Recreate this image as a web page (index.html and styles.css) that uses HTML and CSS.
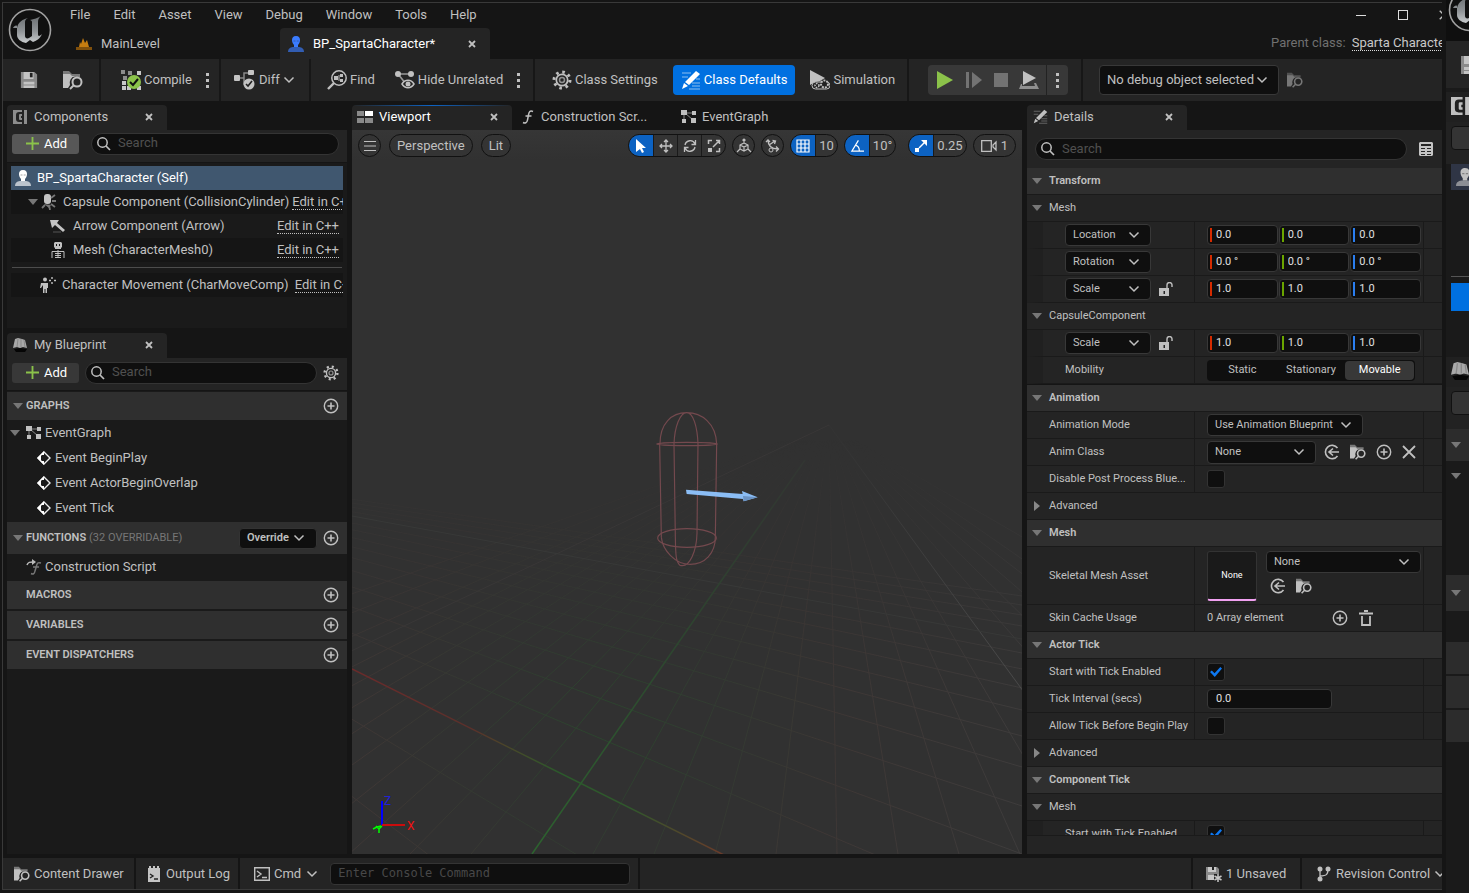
FILE: index.html
```html
<!DOCTYPE html>
<html lang="en">
<head>
<meta charset="utf-8">
<title>BP_SpartaCharacter</title>
<link rel="stylesheet" href="styles.css">
</head>
<body>
<svg class="defs" aria-hidden="true">
  <defs>
    <linearGradient id="metal" x1="0" y1="0" x2="0" y2="1"><stop offset="0" stop-color="#6b6f72"/><stop offset=".55" stop-color="#8f9396"/><stop offset="1" stop-color="#c8cbcd"/></linearGradient>
  </defs>
  <symbol id="logo" viewBox="0 0 44 44"><circle cx="22" cy="22" r="20.5" fill="#101010" stroke="#a2a2a2" stroke-width="1.6"/><path fill="url(#metal)" d="M9 20C10 14 15 11 20 10c-2 1-3 2-3 4v14c0 2 2 3 4 2l3-2V14c0-1-1-2-2-2 4-1 8-2 11-4-2 2-3 3-3 6v12c0 3 2 2 4 0-2 5-6 7-9 8l-3-2-4 3c-5-1-9-4-9-8V18c-1-1-3 0-4 2z"/></symbol>
  <symbol id="save" viewBox="0 0 20 20"><path d="M1 1h15l3 3v15H1z" fill="#8a8a8a"/><path fill="#c4c4c4" d="M4 1h11v8H4zM4 12h12v3H4zM4 16h12v3H4z"/><path fill="#222" d="M11 2h3v5h-3z"/></symbol>
  <symbol id="browse" viewBox="0 0 20 20"><path fill="currentColor" fill-opacity=".55" d="M0 1h6l3 3h8v3H0z"/><path fill="currentColor" d="M0 4h7l2 2h3a7 7 0 0 0-5 9l-2 3H0z"/><circle cx="14" cy="12" r="4.500" fill="none" stroke="currentColor" stroke-width="2"/><path d="M11 15l-4 4" stroke="currentColor" stroke-width="2"/></symbol>
  <symbol id="compile" viewBox="0 0 20 20"><path fill="#8c8c8c" d="M0 0h4v4H0zM7 1h4v4H7zM2 6h4v4H2z"/><path fill="#c8c8c8" d="M16 1h4v4h-4zM1 11h4v4H1zM1 16h4v4H1zM6 16h4v4H6zM16 16h4v4h-4z"/><circle cx="13" cy="12" r="7" fill="#8bc24a"/><path d="M9 12l3 3 5-6" fill="none" stroke="#111" stroke-width="2"/></symbol>
  <symbol id="dots" viewBox="0 0 4 16"><path fill="currentColor" d="M0 1h3v3H0zM0 7h3v3H0zM0 13h3v3H0z"/></symbol>
  <symbol id="diff" viewBox="0 0 22 20"><path d="M4 8h6M10 8V3h5M10 8v6h3" fill="none" stroke="#888" stroke-width="1.500"/><rect x="0" y="5" width="6" height="6" rx="1" fill="#c4c4c4"/><rect x="14" y="0" width="6" height="5" rx="1" fill="#c4c4c4"/><circle cx="15" cy="14" r="5.500" fill="#c4c4c4"/><path d="M12 14l2 2 4-5" fill="none" stroke="#222" stroke-width="1.600"/></symbol>
  <symbol id="chev" viewBox="0 0 12 8"><path d="M1.500 1.500L6 6l4.500-4.500" fill="none" stroke="currentColor" stroke-width="1.500"/></symbol>
  <symbol id="find" viewBox="0 0 20 20"><circle cx="12" cy="8" r="7.200" fill="none" stroke="currentColor" stroke-width="1.500"/><path d="M7 13l-6 6" stroke="currentColor" stroke-width="2.400"/><path fill="currentColor" d="M7 6h4v4H7zM13 4h3v3h-3zM13 9h3v3h-3z"/><path d="M12 5v6" stroke="currentColor"/></symbol>
  <symbol id="hide" viewBox="0 0 20 20"><path d="M3 4h14M3 4l8 10" stroke="#999" stroke-width="1.600"/><circle cx="3" cy="4" r="3" fill="currentColor"/><circle cx="16" cy="4" r="3" fill="currentColor"/><path d="M7 14c3-5 9-5 12 0-3 5-9 5-12 0z" fill="#222" stroke="currentColor" stroke-width="1.500"/><circle cx="13" cy="14" r="2.500" fill="currentColor"/></symbol>
  <symbol id="gear" viewBox="0 0 20 20"><circle cx="10" cy="10" r="5.700" fill="none" stroke="currentColor" stroke-width="1.700"/><circle cx="10" cy="10" r="8" fill="none" stroke="currentColor" stroke-width="3" stroke-dasharray="2.600 3.680"/><circle cx="10" cy="10" r="2.500" fill="none" stroke="currentColor" stroke-opacity=".7" stroke-width="1.500"/></symbol>
  <symbol id="pencil" viewBox="0 0 20 20"><path d="M1 3h9M1 7h6M11 13h8M11 16h8M8 19h11M15 9h4" stroke="currentColor" stroke-opacity=".55"/><path fill="currentColor" d="M15 1l4 3L8 15l-4-3zM3 13l4 3-6 3z"/></symbol>
  <symbol id="sim" viewBox="0 0 20 20"><path fill="currentColor" d="M0 0l15 8-5 3-5 1-5 3z"/><rect x="2" y="12" width="18" height="7" rx="3.500" fill="#222" stroke="currentColor"/><circle cx="7" cy="15.500" r="2" fill="none" stroke="currentColor" stroke-width="1.500" stroke-dasharray="1.500 1"/><circle cx="14.500" cy="14" r="3.500" fill="#222" stroke="currentColor" stroke-width="2" stroke-dasharray="2 1"/></symbol>
  <symbol id="play" viewBox="0 0 18 18"><path fill="#8bc24a" d="M1 0l16 9-16 9z"/></symbol>
  <symbol id="step" viewBox="0 0 16 16"><path fill="#737373" d="M0 0h3v16H0zM6 0l10 8-10 8z"/></symbol>
  <symbol id="eject" viewBox="0 0 20 18"><path fill="#c0c0c0" d="M4 0l13 7-13 7z"/><path fill="#8f8f8f" d="M3 13v2h13l-1-3h2l3 6H0l2-5z"/></symbol>
  <symbol id="person" viewBox="0 0 16 16"><path fill="currentColor" d="M8 0c3 0 4 2 4 4s-1 4-2 5v2H6V9C5 8 4 6 4 4s1-4 4-4z"/><path fill="currentColor" fill-opacity=".65" d="M0 16c0-4 3-5 6-5h4c3 0 6 1 6 5z"/><path d="M5.500 5h2M8.700 5h2" stroke="#222" stroke-opacity=".4"/></symbol>
  <symbol id="level" viewBox="0 0 16 12"><path fill="#c67d10" d="M3 9l1-5 1 2 2-6 2 5 2-3 2 7z"/><path fill="#80500c" d="M0 9h16v3H0z"/></symbol>
  <symbol id="close" viewBox="0 0 8 8"><path d="M1 1l6 6M7 1L1 7" stroke="currentColor" stroke-width="1.800"/></symbol>
  <symbol id="comp" viewBox="0 0 14 14"><path fill="currentColor" d="M0 0h9v2H6a3 3 0 0 0-3 3v4a3 3 0 0 0 3 3h3v2H0zM11 0h3v14h-3zM6 5a1 1 0 0 1 1-1h2v2H8v2h1v2H7a1 1 0 0 1-1-1z"/></symbol>
  <symbol id="plus" viewBox="0 0 14 14"><path d="M7 0v14M0 7h14" stroke="#8bc24a" stroke-width="2"/></symbol>
  <symbol id="lens" viewBox="0 0 14 14"><circle cx="5.500" cy="5.500" r="4.700" fill="none" stroke="currentColor" stroke-width="1.500"/><path d="M9 9l4 4" stroke="currentColor" stroke-width="1.700"/></symbol>
  <symbol id="down" viewBox="0 0 10 6"><path fill="#777" d="M0 0h10L5 6z"/></symbol>
  <symbol id="right" viewBox="0 0 10 10"><path fill="#888" d="M2 0v10l6-5z"/></symbol>
  <symbol id="capsule" viewBox="0 0 16 16"><rect x="3" y="0" width="7" height="10" rx="3" fill="#c4c4c4"/><path d="M10 4l4-3M11 7h4M10 10l4 3M8 11l1 5M4 11l-3 3" stroke="#777" stroke-width="1.800"/><path d="M3 10l7 1-2 3z" fill="#777"/></symbol>
  <symbol id="arrow" viewBox="0 0 16 14"><path fill="#c4c4c4" d="M0 1h9L7 4l8 7-2 2-8-7-3 3z"/><path d="M3 13h8" stroke="#555"/></symbol>
  <symbol id="skel" viewBox="0 0 14 16"><path fill="currentColor" fill-rule="evenodd" d="M4 0h6l1 1v4l-1 1v1H4V6L3 5V1zM5 2v2h1V2zM8 2v2h1V2z"/><path d="M1 16V9.500h12V16M7 8v8M4 11.500h6M4 13.500h6M4 15.500h6" fill="none" stroke="currentColor"/></symbol>
  <symbol id="move" viewBox="0 0 16 16"><circle cx="5" cy="2.500" r="2" fill="currentColor"/><path fill="currentColor" d="M1 6h7v5H7v5H5.500v-4h-1v4H3V8l-2 3H0z"/><path d="M12 0v2M12 5v2M9 3.500h2M14 3.500h2" stroke="currentColor" stroke-width="1.400"/></symbol>
  <symbol id="book" viewBox="0 0 14 14"><path fill="#a8a8a8" d="M2 1l3-1 4 1 3 1 2 8-4-1-3 1-3-1-4 1z"/><path d="M5 1L4 9M8 1v8M11 2l1 7" stroke="#888"/><path fill="#050505" d="M1 11l6-1 7 1-2 3H3z"/></symbol>
  <symbol id="cplus" viewBox="0 0 16 16"><circle cx="8" cy="8" r="6.700" fill="none" stroke="currentColor" stroke-width="1.400"/><path d="M8 4.500v7M4.500 8h7" stroke="currentColor" stroke-width="1.600"/></symbol>
  <symbol id="graph" viewBox="0 0 15 13"><path d="M4 3h9M4 3l8 7M3 4v7" stroke="#888"/><path fill="currentColor" d="M0 0h6v5H0zM11 1h4v4h-4zM1 9h4v4H1zM10 8h5v5h-5z"/></symbol>
  <symbol id="event" viewBox="0 0 14 14"><path d="M7 1l6 6-6 6-6-6z" fill="none" stroke="#eee" stroke-width="1.400"/><path fill="#fff" d="M7 0v4H4v6h3v4L0 7z"/></symbol>
  <symbol id="func" viewBox="0 0 12 14"><path d="M11 1.500C8 0 7 2 6.500 5L5.500 10C5 13 3 13.500 1 12.500M3.500 6h6" fill="none" stroke="currentColor" stroke-width="1.500"/></symbol>
  <symbol id="cscript" viewBox="0 0 16 16"><path d="M15 4c-3-1-4 0-4.500 3L9 12c-.5 3-2 3.500-4 2.500M7 8h6" fill="none" stroke="#777" stroke-width="1.500"/><path d="M1 6c1-3 3-3 6-3" fill="none" stroke="#bbb" stroke-width="1.500"/><path d="M6 0l4 3-4 3z" fill="#bbb"/></symbol>
  <symbol id="views" viewBox="0 0 16 12"><path fill="#8a8a8a" d="M0 0h7v5H0zM0 7h7v5H0zM8 7h8v5H8z"/><path fill="#fff" d="M8 0h8v5H8z"/></symbol>
  <symbol id="burger" viewBox="0 0 12 12"><path d="M0 1.500h12M0 6h12M0 10.500h12" stroke="currentColor" stroke-width="1.200"/></symbol>
  <symbol id="cursor" viewBox="0 0 12 14"><path fill="#fff" d="M1 0l10 9H7l2 4-2 1-2-4-4 3z"/></symbol>
  <symbol id="cross4" viewBox="0 0 14 14"><path d="M7 1v12M1 7h12M5 3l2-2 2 2M5 11l2 2 2-2M3 5L1 7l2 2M11 5l2 2-2 2" fill="none" stroke="currentColor" stroke-width="1.300"/></symbol>
  <symbol id="rot" viewBox="0 0 14 14"><path d="M2 6c1-5 8-6 10-1M12 8c-1 5-8 6-10 1M12.500 1v4.500H8.500M1.500 13V8.500H5.500" fill="none" stroke="currentColor" stroke-width="1.300"/></symbol>
  <symbol id="scale" viewBox="0 0 14 14"><path d="M1.500 5V1.500H5M9 1.500h3.500V5M12.500 9v3.500H9M6 8l6-6" fill="none" stroke="currentColor" stroke-width="1.500"/><path fill="currentColor" d="M1 9h4v4H1z"/></symbol>
  <symbol id="world" viewBox="0 0 16 16"><path d="M8 1v4M4 7l4-2 4 2v4l-4 2-4-2zM4 7l4 2 4-2M8 9v4M4 11l-3 3M12 11l3 3M6.500 2.500L8 1l1.500 1.500" fill="none" stroke="currentColor" stroke-width="1.200"/></symbol>
  <symbol id="snap" viewBox="0 0 16 16"><path d="M3 2c0 5 3 9 10 9M4 7l6-4M1 4l2-2 2 2M11 8.500l2.500 2.500-2.500 2.500M7.500 2.500l3 .5-1 3" fill="none" stroke="currentColor" stroke-width="1.300"/><circle cx="6" cy="12" r="2" fill="none" stroke="currentColor"/></symbol>
  <symbol id="grid" viewBox="0 0 14 14"><path d="M1 1h12v12H1zM5 1v12M9 1v12M1 5h12M1 9h12" fill="none" stroke="#fff" stroke-width="1.200"/></symbol>
  <symbol id="angle" viewBox="0 0 15 14"><path d="M9 1L2 12.500h13M6 6c3 1 4 3 4 6" fill="none" stroke="#fff" stroke-width="1.300"/></symbol>
  <symbol id="sarrow" viewBox="0 0 12 12"><path fill="#fff" d="M0 8h4v4H0zM6 0h6v6z"/><path d="M4 8l6-6" stroke="#fff" stroke-width="1.500"/></symbol>
  <symbol id="cam" viewBox="0 0 16 12"><path d="M.7.7h9.600v10.600H.7zM15 2v8l-3-3V5z" fill="none" stroke="currentColor" stroke-width="1.300"/></symbol>
  <symbol id="tbl" viewBox="0 0 14 14"><path fill="#c4c4c4" fill-rule="evenodd" d="M1 0h12l1 1v12l-1 1H1l-1-1V1zM2 2v2h10V2zM2 6v1h4V6zM8 6v1h4V6zM2 9v1h4V9zM8 9v1h4V9zM2 12v1h4v-1zM8 12v1h4v-1z"/></symbol>
  <symbol id="unlock" viewBox="0 0 14 14"><path fill="currentColor" fill-rule="evenodd" d="M0 6h10v8H0zM4.500 9v3h1.500V9z"/><path d="M8 6V3a2.500 2.500 0 0 1 5 0v2" fill="none" stroke="currentColor" stroke-width="1.400"/></symbol>
  <symbol id="use" viewBox="0 0 16 16"><path d="M13.500 4a6.700 6.700 0 1 0 0 8M15 8H5M9 4.500L5 8l4 3.500" fill="none" stroke="currentColor" stroke-width="1.600"/></symbol>
  <symbol id="bigx" viewBox="0 0 14 14"><path d="M1 1l12 12M13 1L1 13" stroke="currentColor" stroke-width="1.800"/></symbol>
  <symbol id="trash" viewBox="0 0 16 16"><path d="M1 3.500h14M6 1h4M4 6v9h8V6" fill="none" stroke="currentColor" stroke-width="1.800"/></symbol>
  <symbol id="log" viewBox="0 0 12 16"><path fill="#c4c4c4" d="M0 2h1V0h2v2h2V0h2v2h2V0h2v2h1v14H0z"/><path d="M2 8l3 2-3 2M6 13h4" fill="none" stroke="#222" stroke-width="1.400"/></symbol>
  <symbol id="cmd" viewBox="0 0 16 14"><path d="M.7.7h14.600v12.600H.7zM3 4l4 3-4 3M8 10.500h5" fill="none" stroke="currentColor" stroke-width="1.400"/></symbol>
  <symbol id="unsaved" viewBox="0 0 16 16"><path fill="#8a8a8a" d="M0 1h11l2 2v11H0z"/><path fill="#c8c8c8" d="M2 1h8v5H2zM2 9h6v5H2z"/><path fill="#222" d="M6 1h2v3H6zM8 8h8v8H8z"/><path d="M12 8v8M8.500 10l7 4M15.500 10l-7 4" stroke="#c8c8c8" stroke-width="1.500"/></symbol>
  <symbol id="branch" viewBox="0 0 14 16"><path d="M3 3v10M3 10c7 0 8-2 8-7" fill="none" stroke="currentColor" stroke-width="1.300"/><circle cx="3" cy="3" r="2.500" fill="currentColor"/><circle cx="11" cy="3" r="2.500" fill="currentColor"/><circle cx="3" cy="13" r="2.500" fill="currentColor"/></symbol>
</svg>

<div class="screen">
<main class="window">
  <header class="title">
    <svg class="logo"><use href="#logo"/></svg>
    <div class="title-main">
      <nav class="menu"><button>File</button><button>Edit</button><button>Asset</button><button>View</button><button>Debug</button><button>Window</button><button>Tools</button><button>Help</button></nav>
      <div class="doc-tabs">
        <div class="doc-tab"><svg class="i16"><use href="#level"/></svg><span>MainLevel</span></div>
        <div class="doc-tab doc-on"><svg class="i16 blue"><use href="#person"/></svg><span>BP_SpartaCharacter*</span><button class="x" aria-label="Close tab"><svg class="i8"><use href="#close"/></svg></button></div>
      </div>
    </div>
    <div class="title-right">
      <div class="winctl"><button aria-label="Minimize"><i class="min"></i></button><button aria-label="Maximize"><i class="max"></i></button><button aria-label="Close"><svg class="i10"><use href="#bigx"/></svg></button></div>
      <div class="parent"><span>Parent class:</span><a href="#">Sparta Character</a></div>
    </div>
  </header>

  <div class="toolbar">
    <div class="seg seg-file"><button aria-label="Save"><svg class="i18"><use href="#save"/></svg></button><button aria-label="Browse"><svg class="i20"><use href="#browse"/></svg></button></div>
    <div class="seg seg-compile"><button><svg class="i20"><use href="#compile"/></svg>Compile</button><button aria-label="Compile options"><svg class="dots"><use href="#dots"/></svg></button></div>
    <div class="seg seg-diff"><button><svg class="i22"><use href="#diff"/></svg>Diff<svg class="chev"><use href="#chev"/></svg></button></div>
    <div class="seg seg-find"><button><svg class="i20"><use href="#find"/></svg>Find</button><button><svg class="i20"><use href="#hide"/></svg>Hide Unrelated</button><button aria-label="Hide options"><svg class="dots"><use href="#dots"/></svg></button></div>
    <div class="seg seg-class"><button><svg class="i20"><use href="#gear"/></svg>Class Settings</button><button class="primary"><svg class="i20"><use href="#pencil"/></svg>Class Defaults</button><button><svg class="i20"><use href="#sim"/></svg>Simulation</button></div>
    <div class="seg seg-play"><div class="playbox"><button aria-label="Play"><svg class="i18"><use href="#play"/></svg></button><button aria-label="Step"><svg class="i16"><use href="#step"/></svg></button><button aria-label="Stop"><i class="stop"></i></button><button aria-label="Eject"><svg class="i20"><use href="#eject"/></svg></button><button class="more" aria-label="Play options"><svg class="dots"><use href="#dots"/></svg></button></div></div>
    <div class="seg seg-debug"><span class="sel sel-debug"><select aria-label="Debug object"><option>No debug object selected</option></select><svg class="chev"><use href="#chev"/></svg></span><button class="dim" aria-label="Browse debug object"><svg class="i16"><use href="#browse"/></svg></button></div>
  </div>

  <div class="work">
    <aside class="left">
      <section class="comp">
        <div class="tabs"><div class="tab"><svg class="i14 gray"><use href="#comp"/></svg><span>Components</span><button class="x" aria-label="Close Components"><svg class="i8"><use href="#close"/></svg></button></div></div>
        <div class="tools"><button class="add add-lit"><svg class="i13"><use href="#plus"/></svg>Add</button><label class="search"><svg class="i14"><use href="#lens"/></svg><input type="text" placeholder="Search" aria-label="Search components"></label></div>
        <div class="tree">
          <div class="node node-on"><svg class="i16"><use href="#person"/></svg><span>BP_SpartaCharacter (Self)</span></div>
          <div class="node d1 dark"><svg class="tri"><use href="#down"/></svg><svg class="i16"><use href="#capsule"/></svg><span>Capsule Component (CollisionCylinder)</span><a href="#">Edit in C++</a></div>
          <div class="node d2"><svg class="i16"><use href="#arrow"/></svg><span>Arrow Component (Arrow)</span><a class="end" href="#">Edit in C++</a></div>
          <div class="node d2 dark"><svg class="i16"><use href="#skel"/></svg><span>Mesh (CharacterMesh0)</span><a class="end" href="#">Edit in C++</a></div>
          <hr>
          <div class="node d3 dark"><svg class="i16"><use href="#move"/></svg><span>Character Movement (CharMoveComp)</span><a href="#">Edit in C++</a></div>
        </div>
      </section>
      <section class="mybp">
        <div class="tabs"><div class="tab"><svg class="i14"><use href="#book"/></svg><span>My Blueprint</span><button class="x" aria-label="Close My Blueprint"><svg class="i8"><use href="#close"/></svg></button></div></div>
        <div class="tools"><button class="add"><svg class="i13"><use href="#plus"/></svg>Add</button><label class="search search-bp"><svg class="i14"><use href="#lens"/></svg><input type="text" placeholder="Search" aria-label="Search blueprint"></label><button class="ico" aria-label="Settings"><svg class="i16"><use href="#gear"/></svg></button></div>
        <div class="bp">
          <div class="cat"><svg class="tri"><use href="#down"/></svg><b>GRAPHS</b><button class="ico" aria-label="Add graph"><svg class="i16"><use href="#cplus"/></svg></button></div>
          <ul class="items">
            <li class="root"><svg class="tri"><use href="#down"/></svg><svg class="i15"><use href="#graph"/></svg>EventGraph</li>
            <li><svg class="i14"><use href="#event"/></svg>Event BeginPlay</li>
            <li><svg class="i14"><use href="#event"/></svg>Event ActorBeginOverlap</li>
            <li><svg class="i14"><use href="#event"/></svg>Event Tick</li>
          </ul>
          <div class="cat cat-fn"><svg class="tri"><use href="#down"/></svg><b>FUNCTIONS</b><small>(32 OVERRIDABLE)</small><button class="override">Override<svg class="chev"><use href="#chev"/></svg></button><button class="ico" aria-label="Add function"><svg class="i16"><use href="#cplus"/></svg></button></div>
          <div class="script"><svg class="i16"><use href="#cscript"/></svg>Construction Script</div>
          <div class="cat bare"><b>MACROS</b><button class="ico" aria-label="Add macro"><svg class="i16"><use href="#cplus"/></svg></button></div>
          <div class="cat bare"><b>VARIABLES</b><button class="ico" aria-label="Add variable"><svg class="i16"><use href="#cplus"/></svg></button></div>
          <div class="cat bare"><b>EVENT DISPATCHERS</b><button class="ico" aria-label="Add dispatcher"><svg class="i16"><use href="#cplus"/></svg></button></div>
        </div>
      </section>
    </aside>

    <section class="center">
      <div class="tabs">
        <div class="tab tab-on"><svg class="i16"><use href="#views"/></svg><span>Viewport</span><button class="x" aria-label="Close Viewport"><svg class="i8"><use href="#close"/></svg></button></div>
        <div class="tab tab-off"><svg class="i14"><use href="#func"/></svg><span>Construction Scr...</span></div>
        <div class="tab tab-off"><svg class="i15"><use href="#graph"/></svg><span>EventGraph</span></div>
      </div>
      <div class="viewport">
        <svg class="scene" viewBox="0 0 670 724" preserveAspectRatio="xMidYMid slice">
          <defs>
            <linearGradient id="fadeg" x1="0" y1="310" x2="0" y2="560" gradientUnits="userSpaceOnUse"><stop offset="0" stop-color="#fff" stop-opacity="0"/><stop offset="1" stop-color="#fff"/></linearGradient>
            <mask id="fade" maskUnits="userSpaceOnUse" x="0" y="0" width="670" height="724"><rect width="670" height="724" fill="url(#fadeg)"/></mask>
            <radialGradient id="tint" cx="250" cy="600" r="430" gradientUnits="userSpaceOnUse"><stop offset="0" stop-color="#2c452e"/><stop offset=".3" stop-color="#333a32"/><stop offset=".55" stop-color="#3e3735"/><stop offset="1" stop-color="#3e3c3c"/></radialGradient>
            <linearGradient id="xaxis" x1="0" y1="539" x2="370" y2="723" gradientUnits="userSpaceOnUse"><stop offset="0" stop-color="#6b2a2a"/><stop offset=".32" stop-color="#5c302b"/><stop offset=".42" stop-color="#4a4729"/><stop offset=".56" stop-color="#2b5a2b"/><stop offset=".75" stop-color="#30582c"/><stop offset="1" stop-color="#6a3b2a"/></linearGradient>
            <linearGradient id="yaxis" x1="455" y1="325" x2="180" y2="724" gradientUnits="userSpaceOnUse"><stop offset="0" stop-color="#323532"/><stop offset=".5" stop-color="#2d472f"/><stop offset="1" stop-color="#2c642e"/></linearGradient>
            <linearGradient id="major" x1="0" y1="310" x2="0" y2="540" gradientUnits="userSpaceOnUse"><stop offset="0" stop-color="#333"/><stop offset="1" stop-color="#494949"/></linearGradient>
          </defs>
          <g fill="none">
            <g mask="url(#fade)" stroke="url(#tint)"><path d="M477 295L-735 724M477 295L-613 724M477 295L-491 724M477 295L-369 724M477 295L-308 724M477 295L-247 724M477 295L-186 724M477 295L-125 724M477 295L-64 724M477 295L-3 724M477 295L58 724M477 295L119 724M477 295L241 724M477 295L302 724M477 295L363 724M477 295L424 724M477 295L485 724M477 295L546 724M477 295L607 724M477 295L668 724M477 295L729 724M477 295L851 724M477 295L912 724M477 295L973 724M477 295L1034 724M477 295L1095 724M477 295L1217 724"/>
            <path d="M-480 300L670 1498M-480 300L670 1178M-480 300L670 993M-480 300L670 787M-480 300L670 724M-480 300L670 676M-480 300L670 637M-480 300L670 606M-480 300L670 580M-480 300L670 558M-480 300L670 539M-480 300L670 523M-480 300L670 496M-480 300L670 485M-480 300L670 475M-480 300L670 466"/></g>
            <path d="M477 295L790 724" stroke="url(#major)"/>
            <path d="M477 295L-430 724" stroke="#393737"/>
            <path d="M0 386L670 509" stroke="#383938"/>
            <path d="M453 330L180 724" stroke="url(#yaxis)" stroke-width="1.500"/>
            <path d="M0 539L372 725" stroke="url(#xaxis)" stroke-width="1.500"/>
          </g>
          <g transform="translate(288 270) scale(.3333)">
            <g fill="none" stroke="#74494e" stroke-width="3.500"><path d="M60 132C60 70 95 38 140 38S228 70 230 132M102 132C104 80 120 38 140 38S172 80 174 132M59 132L64 412M230 132L226 412M102 132L106 410M174 132L171 400M64 412C68 450 105 493 150 493S226 460 226 412M106 410C107 470 108 485 120 496C150 505 170 450 171 400"/><ellipse cx="141" cy="132" rx="91" ry="5"/><ellipse cx="141" cy="414" rx="88" ry="28"/></g>
            <path d="M138 269L308 282 306 273 353 292 311 304 309 297 140 282z" fill="#8bbdf5"/><path d="M309 288L353 292 311 304z" fill="#6b93c4"/>
          </g>
        </svg>
        <svg class="gizmo" viewBox="0 0 48 40"><path d="M12 7v24" stroke="#00f" stroke-width="2"/><path d="M12 31h23" stroke="#f00" stroke-width="1.500"/><path d="M3 35l4-2 4-1M9 39v-4l-3-3M9 35l3-3" stroke="#0f0" stroke-width="1.500" fill="none"/><text x="14" y="11" fill="#2222d8">Z</text><text x="37" y="36" fill="#e11">X</text></svg>
        <div class="vtools">
          <button class="pill round lead" aria-label="Viewport options"><svg class="i12"><use href="#burger"/></svg></button>
          <button class="pill lead">Perspective</button>
          <button class="pill">Lit</button>
          <div class="pill group push"><button class="on" aria-label="Select"><svg class="i14"><use href="#cursor"/></svg></button><button aria-label="Move"><svg class="i14"><use href="#cross4"/></svg></button><button aria-label="Rotate"><svg class="i14"><use href="#rot"/></svg></button><button aria-label="Scale"><svg class="i14"><use href="#scale"/></svg></button></div>
          <button class="pill round" aria-label="World space"><svg class="i16"><use href="#world"/></svg></button>
          <button class="pill round" aria-label="Surface snapping"><svg class="i16"><use href="#snap"/></svg></button>
          <div class="pill group"><button class="on" aria-label="Grid snap"><svg class="i14"><use href="#grid"/></svg></button><button>10</button></div>
          <div class="pill group"><button class="on" aria-label="Angle snap"><svg class="i14"><use href="#angle"/></svg></button><button>10°</button></div>
          <div class="pill group wide"><button class="on" aria-label="Scale snap"><svg class="i12"><use href="#sarrow"/></svg></button><button>0.25</button></div>
          <button class="pill"><svg class="i16"><use href="#cam"/></svg>1</button>
        </div>
      </div>
    </section>

    <aside class="details">
      <div class="tabs"><div class="tab"><svg class="i15"><use href="#pencil"/></svg><span>Details</span><button class="x" aria-label="Close Details"><svg class="i8"><use href="#close"/></svg></button></div></div>
      <div class="tools dtools"><label class="search"><svg class="i14"><use href="#lens"/></svg><input type="text" placeholder="Search" aria-label="Search details"></label><button class="ico" aria-label="Table view"><svg class="i14"><use href="#tbl"/></svg></button></div>
      <div class="props">
        <div class="head"><svg class="tri"><use href="#down"/></svg><b>Transform</b></div>
        <div class="head sub"><svg class="tri"><use href="#down"/></svg>Mesh</div>
        <div class="row in"><div class="name"><span class="sel"><select aria-label="Location type"><option>Location</option></select><svg class="chev"><use href="#chev"/></svg></span></div><div class="val"><div class="vec"><input class="r" aria-label="X" value="0.0"><input class="g" aria-label="Y" value="0.0"><input class="b" aria-label="Z" value="0.0"></div></div></div>
        <div class="row in"><div class="name"><span class="sel"><select aria-label="Rotation type"><option>Rotation</option></select><svg class="chev"><use href="#chev"/></svg></span></div><div class="val"><div class="vec"><input class="r" aria-label="X" value="0.0 °"><input class="g" aria-label="Y" value="0.0 °"><input class="b" aria-label="Z" value="0.0 °"></div></div></div>
        <div class="row in"><div class="name"><span class="sel"><select aria-label="Scale type"><option>Scale</option></select><svg class="chev"><use href="#chev"/></svg></span><button class="ico" aria-label="Lock ratio"><svg class="i14"><use href="#unlock"/></svg></button></div><div class="val"><div class="vec"><input class="r" aria-label="X" value="1.0"><input class="g" aria-label="Y" value="1.0"><input class="b" aria-label="Z" value="1.0"></div></div></div>
        <div class="head sub"><svg class="tri"><use href="#down"/></svg>CapsuleComponent</div>
        <div class="row in"><div class="name"><span class="sel"><select aria-label="Capsule scale type"><option>Scale</option></select><svg class="chev"><use href="#chev"/></svg></span><button class="ico" aria-label="Lock ratio"><svg class="i14"><use href="#unlock"/></svg></button></div><div class="val"><div class="vec"><input class="r" aria-label="X" value="1.0"><input class="g" aria-label="Y" value="1.0"><input class="b" aria-label="Z" value="1.0"></div></div></div>
        <div class="row in"><div class="name">Mobility</div><div class="val"><div class="mob"><button>Static</button><button>Stationary</button><button class="mob-on">Movable</button></div></div></div>
        <div class="head gap"><svg class="tri"><use href="#down"/></svg><b>Animation</b></div>
        <div class="row"><label class="name" for="mode">Animation Mode</label><div class="val"><span class="sel sel-mode"><select id="mode"><option>Use Animation Blueprint</option></select><svg class="chev"><use href="#chev"/></svg></span></div></div>
        <div class="row"><label class="name" for="anim">Anim Class</label><div class="val"><span class="sel sel-anim"><select id="anim"><option>None</option></select><svg class="chev"><use href="#chev"/></svg></span><div class="acts"><button class="ico" aria-label="Use selected"><svg class="i16"><use href="#use"/></svg></button><button class="ico" aria-label="Browse"><svg class="i16"><use href="#browse"/></svg></button><button class="ico" aria-label="New"><svg class="i16"><use href="#cplus"/></svg></button><button class="ico" aria-label="Clear"><svg class="i14"><use href="#bigx"/></svg></button></div></div></div>
        <div class="row"><label class="name" for="dpp">Disable Post Process Blue...</label><div class="val"><input type="checkbox" id="dpp"></div></div>
        <div class="head sub"><svg class="tri side"><use href="#right"/></svg>Advanced</div>
        <div class="head"><svg class="tri"><use href="#down"/></svg><b>Mesh</b></div>
        <div class="row tall"><label class="name" for="skm">Skeletal Mesh Asset</label><div class="val"><div class="thumb">None</div><div class="asset"><span class="sel"><select id="skm"><option>None</option></select><svg class="chev"><use href="#chev"/></svg></span><div class="acts"><button class="ico" aria-label="Use selected"><svg class="i16"><use href="#use"/></svg></button><button class="ico" aria-label="Browse"><svg class="i16"><use href="#browse"/></svg></button></div></div></div></div>
        <div class="row"><div class="name">Skin Cache Usage</div><div class="val"><span class="count">0 Array element</span><div class="acts"><button class="ico" aria-label="Add element"><svg class="i16"><use href="#cplus"/></svg></button><button class="ico" aria-label="Remove all"><svg class="i16"><use href="#trash"/></svg></button></div></div></div>
        <div class="head"><svg class="tri"><use href="#down"/></svg><b>Actor Tick</b></div>
        <div class="row"><label class="name" for="swt">Start with Tick Enabled</label><div class="val"><input type="checkbox" id="swt" checked></div></div>
        <div class="row"><label class="name" for="int">Tick Interval (secs)</label><div class="val"><input class="num" id="int" value="0.0"></div></div>
        <div class="row"><label class="name" for="atb">Allow Tick Before Begin Play</label><div class="val"><input type="checkbox" id="atb"></div></div>
        <div class="head sub"><svg class="tri side"><use href="#right"/></svg>Advanced</div>
        <div class="head"><svg class="tri"><use href="#down"/></svg><b>Component Tick</b></div>
        <div class="head sub"><svg class="tri"><use href="#down"/></svg>Mesh</div>
        <div class="row in"><label class="name" for="swt2">Start with Tick Enabled</label><div class="val"><input type="checkbox" id="swt2" checked></div></div>
      </div>
      <div class="foot"></div>
    </aside>
  </div>

  <footer class="status">
    <div class="st st-drawer"><button><svg class="i16"><use href="#browse"/></svg>Content Drawer</button></div>
    <div class="st st-log"><button><svg class="i16"><use href="#log"/></svg>Output Log</button></div>
    <div class="st st-cmd"><button><svg class="i16"><use href="#cmd"/></svg>Cmd<svg class="chev"><use href="#chev"/></svg></button><input type="text" placeholder="Enter Console Command" aria-label="Console command"></div>
    <div class="st st-fill"></div>
    <div class="st st-unsaved"><button><svg class="i16"><use href="#unsaved"/></svg>1 Unsaved</button></div>
    <div class="st st-rev"><button><svg class="i16"><use href="#branch"/></svg>Revision Control<svg class="chev"><use href="#chev"/></svg></button></div>
  </footer>
</main>

<aside class="behind" aria-hidden="true">
  <div class="bh-top"><svg class="logo"><use href="#logo"/></svg></div>
  <div class="bh-bar"><svg class="i20"><use href="#save"/></svg></div>
  <div class="bh-tab"><svg class="i18"><use href="#comp"/></svg></div>
  <div class="bh-tools"><i></i></div>
  <div class="bh-sel"><svg class="i18"><use href="#person"/></svg></div>
  <div class="bh-list"></div>
  <div class="bh-blue"></div>
  <div class="bh-blank"></div>
  <div class="bh-tab"><svg class="i18"><use href="#book"/></svg></div>
  <div class="bh-tools"><i></i></div>
  <div class="bh-cat"><svg class="tri"><use href="#down"/></svg></div>
  <div class="bh-root"><svg class="tri"><use href="#down"/></svg></div>
  <div class="bh-cat bh-fn"><svg class="tri"><use href="#down"/></svg></div>
  <div class="bh-script"></div>
  <div class="bh-cat"></div>
  <div class="bh-cat"></div>
  <div class="bh-cat"></div>
</aside>
</div>
</body>
</html>
```

FILE: styles.css
```css
* { box-sizing: border-box; }
body { margin: 0; background: #151515; color: #c0c0c0; font: 13px/16px Roboto, sans-serif; }
button, input, select { font: inherit; color: inherit; margin: 0; }
button { display: flex; align-items: center; background: none; border: 0; padding: 0; white-space: nowrap; flex: none; }
input { min-width: 0; outline: 0; }
svg { flex: none; display: block; }
a { color: inherit; text-decoration: none; border-bottom: 1px dotted #c0c0c0; line-height: 14px; white-space: nowrap; }
span { white-space: nowrap; }
.defs { position: absolute; width: 0; height: 0; }
.i8 { width: 8px; height: 8px; }
.i10 { width: 10px; height: 10px; }
.i12 { width: 12px; height: 12px; }
.i13 { width: 13px; height: 13px; }
.i14 { width: 14px; height: 14px; }
.i15 { width: 15px; height: 15px; }
.i16 { width: 16px; height: 16px; }
.i18 { width: 18px; height: 18px; }
.i20 { width: 20px; height: 20px; }
.i22 { width: 22px; height: 20px; }
.chev { width: 12px; height: 8px; }
.dots { width: 4px; height: 16px; }
.tri { width: 10px; height: 6px; }
.side { height: 10px; }
.blue { color: #3b7cff; }
.gray { color: #8d8d8d; }

.screen { display: flex; height: 100vh; overflow: hidden; }
.window { flex: 1; min-width: 0; display: flex; flex-direction: column; overflow: hidden; margin: 2px 0 3px 2px; border: solid #393939; border-width: 1px 0 1px 1px; background: #151515; }

.title { display: flex; height: 56px; flex: none; }
.logo { width: 44px; height: 44px; margin: 5px 0 0 5px; flex: none; }
.title-main { flex: 1; display: flex; flex-direction: column; }
.menu { display: flex; gap: 23px; padding: 0 0 2px 18px; height: 25px; }
.doc-tabs { display: flex; height: 31px; }
.doc-tab { display: flex; align-items: center; gap: 9px; width: 210px; padding: 0 14px 0 8px; border-radius: 4px 4px 0 0; }
.doc-tab:first-child { width: 212px; padding-left: 24px; margin-right: 16px; }
.doc-on { background: #242424; color: #fff; }
.x { margin-left: auto; color: #c0c0c0; }
.title-right { width: 171px; overflow: hidden; }
.winctl { display: flex; height: 24px; align-items: center; justify-content: space-between; padding-left: 85px; margin-right: -7px; }
.min { width: 10px; height: 1px; background: #ddd; }
.max { width: 10px; height: 10px; border: 1px solid #ddd; }
.parent { display: flex; gap: 6px; height: 32px; align-items: center; color: #707070; }
.parent a { color: #c8c8c8; border-color: #ddd; }

.toolbar { display: flex; height: 42px; flex: none; background: #242424; }
.seg { display: flex; align-items: center; border-right: 2px solid #171717; flex: none; }
.seg button { gap: 3px; }
.seg-file { width: 98px; padding-left: 17px; gap: 25px; }
.seg-compile { width: 120px; padding-left: 20px; gap: 14px; }
.seg-diff { width: 90px; padding-left: 13px; }
.seg .seg-diff button { gap: 2px; }
.seg-find { width: 224px; padding-left: 16px; gap: 20px; }
.seg-find button + button + button { margin-left: -6px; }
.seg-class { width: 374px; padding-left: 17px; gap: 15px; }
.seg .primary { background: #0070e0; color: #fff; height: 30px; padding: 0 8px; border-radius: 4px; }
.seg-play { width: 174px; padding-left: 19px; }
.playbox { display: flex; height: 30px; width: 140px; background: #383838; border-radius: 4px; align-items: center; gap: 12px; padding-left: 8px; }
.stop { width: 14px; height: 14px; background: #737373; }
.playbox .more { height: 30px; width: 22px; margin-left: auto; justify-content: center; border-left: 1px solid #222; }
.playbox button:nth-child(4) { margin-left: -1px; margin-right: -12px; }
.seg-debug { flex: 1; border: 0; padding-left: 16px; gap: 8px; }
.dim { color: #777; }

.sel { display: grid; align-items: center; height: 22px; width: 86px; }
.sel select { grid-area: 1/1; appearance: none; width: 100%; height: 100%; background: #0f0f0f; border: 1px solid #383838; border-radius: 4px; padding: 0 7px 1px; outline: 0; }
.sel .chev { grid-area: 1/1; justify-self: end; margin-right: 11px; pointer-events: none; }
.sel-debug { width: 180px; height: 30px; }

.work { flex: 1; min-height: 0; display: flex; gap: 5px; padding: 4px 0 4px 4px; }
.left { width: 340px; display: flex; flex-direction: column; gap: 5px; }
.left section { display: flex; flex-direction: column; }
.tabs { display: flex; height: 25px; flex: none; }
.tab { width: 160px; display: flex; align-items: center; gap: 7px; padding: 0 14px 2px 6px; background: #242424; border-radius: 4px 4px 0 0; }
.tab-on { color: #fff; gap: 6px; padding-left: 5px; background: linear-gradient(90deg, #242424, #0d63c4 50%, #242424) top/100% 1px no-repeat #242424; }
.tab-off { background: none; gap: 6px; padding-left: 9px; }
.tools { height: 33px; flex: none; display: flex; align-items: center; gap: 12px; padding: 0 8px 5px 5px; background: #242424; border-bottom: 1px solid #151515; }
.add { width: 67px; height: 20px; gap: 5px; padding-left: 14px; background: #383838; border-radius: 3px; color: #fff; }
.add-lit { background: #575757; }
.search { flex: 1; display: flex; align-items: center; gap: 7px; height: 22px; padding-left: 5px; background: #0f0f0f; border: 1px solid #343434; border-radius: 11px; }
.search input { flex: 1; background: none; border: 0; padding: 0 0 1px; }
.search input::placeholder { color: #505050; opacity: 1; }
.mybp .tools { gap: 6px; padding-bottom: 3px; }
.ico { color: #c0c0c0; }
.comp { height: 223px; background: linear-gradient(#151515 25px, #1a1a1a 0); }
.tree { padding: 3px 4px; }
.node { display: flex; align-items: center; height: 24px; gap: 7px; overflow: hidden; padding-left: 4px; }
.node-on { background: #40576f; color: #fff; gap: 6px; }
.dark { background: #151515; }
.d1 { padding-left: 17px; gap: 3px; }
.d1 span { margin-left: 3px; }
.d2 { padding-left: 39px; padding-right: 4px; }
.d3 { padding-left: 29px; gap: 6px; }
.end { margin-left: auto; }
.tree hr { border: 0; height: 1px; margin: 5px 1px; background: #4c4c4c; }
.mybp { flex: 1; }
.bp { flex: 1; background: #1a1a1a; padding-top: 1px; }
.cat { display: flex; align-items: center; height: 28px; background: #2f2f2f; padding: 0 8px 0 6px; gap: 3px; font-size: 11px; }
.cat b, .props b { font-weight: 600; }
.cat .ico { margin-left: auto; }
.cat small { font-size: 11px; color: #777; }
.cat-fn { height: 32px; }
.cat .override { margin-left: auto; height: 21px; width: 78px; padding-left: 7px; gap: 4px; background: #0f0f0f; border: 1px solid #333; border-radius: 4px; font-weight: 600; }
.cat .override + .ico { margin-left: 3px; }
.bare { padding-left: 19px; margin-bottom: 2px; }
.items { list-style: none; margin: 0; padding: 0 0 2px; }
.items li { display: flex; align-items: center; gap: 4px; height: 25px; padding-left: 30px; }
.items .root { padding-left: 3px; }
.root .i15 { margin-left: 2px; }
.script { display: flex; align-items: center; height: 27px; padding: 0 0 2px 19px; gap: 3px; }

.center { flex: 1; min-width: 0; display: flex; flex-direction: column; }
.viewport { position: relative; flex: 1; min-height: 0; overflow: hidden; background: linear-gradient(#363636, #313131 30px); }
.scene { position: absolute; width: 100%; height: 100%; }
.gizmo { position: absolute; left: 18px; bottom: 20px; width: 48px; height: 40px; font: 12px Roboto, sans-serif; }
.vtools { position: relative; display: flex; gap: 6px; padding: 4px 6px; }
.pill { height: 23px; min-width: 23px; padding: 0 7px; gap: 4px; justify-content: center; display: flex; align-items: center; background: #343434; border: 1px solid #111; border-radius: 12px; }
.round { padding: 0; }
.lead { margin-right: 2px; }
.group { padding: 0; overflow: hidden; gap: 0; }
.group button { min-width: 20px; height: 21px; justify-content: center; border-left: 1px solid #1a1a1a; padding: 0 3px; }
.group .on { background: #0c62c2; border: 0; width: 24px; }
.push { margin-left: auto; }
.push button { width: 24px; }
.wide { margin-left: 6px; }

.details { width: 415px; flex: none; display: flex; flex-direction: column; font-size: 11px; }
.details .tab, .details .search { font-size: 13px; }
.details .tab { gap: 6px; }
.dtools { height: 38px; padding: 0 9px 0 8px; border: 0; }
.props { flex: 1; min-height: 0; overflow: hidden; }
.head { display: flex; align-items: center; height: 27px; gap: 7px; padding-left: 5px; background: #2f2f2f; border-bottom: 1px solid #1a1a1a; }
.sub { background: #242424; }
.gap { margin-top: 1px; }
.row { display: flex; height: 27px; background: #242424; border-bottom: 1px solid #1a1a1a; }
.in { border-left: 16px solid #202020; }
.name { width: 168px; padding-left: 22px; display: flex; align-items: center; border-right: 1px solid #1a1a1a; white-space: nowrap; overflow: hidden; flex: none; }
.in .name { width: 152px; gap: 8px; }
.val { flex: 1; display: flex; align-items: center; padding: 0 2px 0 12px; margin-right: 18px; border-right: 1px solid #1a1a1a; gap: 8px; }
.vec { flex: 1; display: grid; grid-template-columns: repeat(3, 1fr); gap: 1px; }
.vec input, .num { width: 100%; height: 20px; background: #0f0f0f; border: 1px solid #383838; border-radius: 4px; padding: 0 0 1px 8px; color: #e0e0e0; }
.vec .r { background: linear-gradient(#d52b00, #d52b00) 2px 2px/2px 14px no-repeat #0f0f0f; }
.vec .g { background: linear-gradient(#6aa500, #6aa500) 2px 2px/2px 14px no-repeat #0f0f0f; }
.vec .b { background: linear-gradient(#2a7ef0, #2a7ef0) 2px 2px/2px 14px no-repeat #0f0f0f; }
.val .num { width: 125px; }
.mob { display: grid; grid-template-columns: repeat(3, 1fr); width: 208px; height: 21px; background: #0f0f0f; border-radius: 4px; padding: 1px; }
.mob button { justify-content: center; border-radius: 4px; }
.mob-on { background: #383838; color: #fff; }
.sel-mode { width: 156px; }
.sel-anim { width: 109px; height: 23px; }
.acts { display: flex; align-items: center; gap: 10px; }
.tall { height: 58px; }
.tall .val { gap: 9px; }
.thumb { width: 50px; height: 50px; display: grid; place-items: center; font-size: 9px; color: #fff; background: #1a1a1a; border: 1px solid #333; border-bottom: 2px solid #f0a0f0; border-radius: 3px; }
.asset { flex: 1; display: grid; gap: 5px; padding-bottom: 6px; }
.asset .sel { width: 100%; }
.asset .acts { padding-left: 4px; }
.count { width: 117px; }
input[type="checkbox"] { appearance: none; width: 18px; height: 18px; background: #0f0f0f; border: 1px solid #333; border-radius: 3px; display: grid; place-items: center; }
input[type="checkbox"]:checked::before { content: ""; width: 12px; height: 10px; background: #0d78f2; clip-path: polygon(0 50%, 15% 36%, 38% 62%, 86% 0, 100% 14%, 40% 100%); }
.foot { height: 19px; background: #242424; border-top: 1px solid #1a1a1a; flex: none; }

.status { display: flex; height: 31px; flex: none; }
.st { display: flex; align-items: center; background: #242424; border-right: 2px solid #151515; flex: none; overflow: hidden; }
.st button { gap: 4px; padding-top: 1px; }
.st-drawer { width: 133px; padding-left: 11px; }
.st-log { width: 104px; padding-left: 10px; }
.st-cmd { width: 400px; padding-left: 14px; gap: 12px; }
.st-cmd .chev { margin-left: 1px; }
.st-cmd input { width: 300px; height: 22px; background: #0f0f0f; border: 1px solid #343434; border-radius: 4px; padding: 0 7px 1px; font: 12px "DejaVu Sans Mono", monospace; }
.st-cmd input::placeholder { color: #484848; opacity: 1; }
.st-fill { flex: 1; }
.st-unsaved { width: 109px; padding-left: 13px; }
.st-rev { width: 140px; padding-left: 14px; border: 0; }

.behind { width: 27px; flex: none; overflow: hidden; background: #1a1a1a; border-left: 4px solid #151515; display: flex; flex-direction: column; }
.behind > div { flex: none; padding-left: 5px; }
.bh-top { height: 41px; }
.behind .bh-top { padding-left: 2px; background: #0f0f0f; }
.bh-top .logo { margin: -12px 0 0; }
.bh-bar { height: 47px; background: #242424; display: flex; align-items: center; }
.bh-bar svg { margin-left: 9px; }
.bh-tab { height: 30px; margin-top: 4px; background: #202020; padding-top: 5px; }
.bh-tools { height: 42px; background: #222; padding-top: 4px; }
.bh-tools i { display: block; width: 60px; height: 24px; background: #343434; border: 1px solid #111; border-radius: 4px; }
.bh-sel { height: 26px; margin-left: 5px; background: #2f3545; display: flex; align-items: center; }
.bh-list { height: 87px; margin-left: 5px; border-bottom: 1px solid #555; }
.bh-blue { height: 28px; margin: 6px 0 0 5px; background: #0070e0; }
.bh-blank { height: 42px; }
.bh-cat { height: 32px; background: #2c2c2c; display: flex; align-items: center; margin-bottom: 2px; }
.bh-root { height: 112px; padding-top: 10px; }
.bh-fn { height: 36px; }
.bh-script { height: 29px; }
```
